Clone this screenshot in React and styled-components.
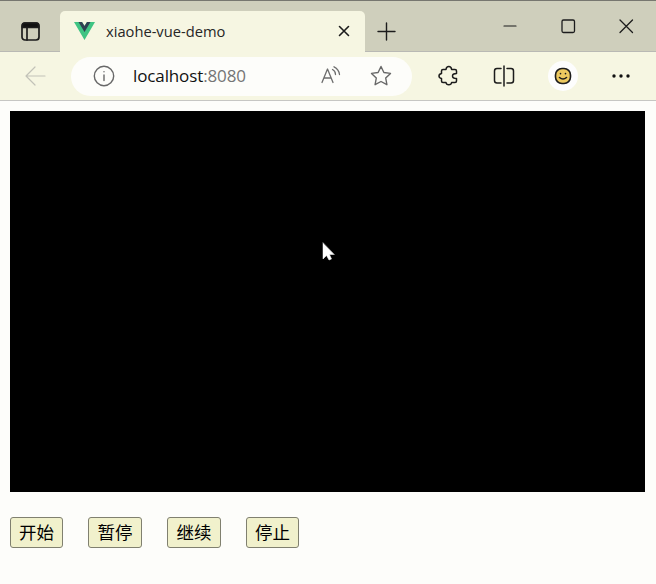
import React from "react";
import styled, { createGlobalStyle } from "styled-components";

const Global = createGlobalStyle`
  * { box-sizing: border-box; }
  body { margin: 0; background: #fdfdfa; overflow: hidden; font-family: "Open Sans", "Noto Sans CJK SC", sans-serif; }
`;
const Window = styled.div`
  position: relative; width: 656px; height: 584px; background: #fdfdfa; overflow: hidden;
`;
const TitleBar = styled.header`
  display: flex; height: 52px; padding-top: 12px; background: #cfcfbc;
  border-top: 1px solid #777770; border-bottom: 1px solid #b9b9b4;
`;
const Side = styled.div`
  width: 60px; padding: 9px 0 0 21px;
`;
const Tab = styled.div`
  display: flex; align-items: center; width: 305px; height: 42px; margin-top: -2px;
  padding: 0 15px 2px 14px; background: #f6f6e2; border-radius: 5px 5px 0 0;
`;
const TabTitle = styled.span`
  flex: 1; margin-left: 11px; font-size: 14.7px; line-height: 20px; color: #262626;
  white-space: nowrap;
`;
const Plus = styled.div`
  flex: 1; padding: 9px 0 0 12px;
`;
const Controls = styled.div`
  display: flex; gap: 42px; padding: 5px 22px 0 0;
`;
const Toolbar = styled.div`
  display: flex; align-items: center; height: 49px; background: #f6f6e2;
  border-bottom: 1px solid #c6c6c3;
`;
const Back = styled.div`
  width: 71px; padding-left: 24px; height: 22px;
`;
const Address = styled.div`
  display: flex; align-items: center; width: 341px; height: 39px; padding: 0 20px 0 22px;
  border-radius: 20px; background: #fdfdfa;
`;
const Url = styled.span`
  flex: 1; margin-left: 18px; color: #111; font-size: 17px; line-height: 24px;
  letter-spacing: -0.12px; white-space: nowrap;
`;
const Port = styled.span`
  color: #757575;
`;
const AddressActions = styled.div`
  display: flex; align-items: center; gap: 29px;
`;
const Tools = styled.div`
  flex: 1; display: flex; align-items: center; justify-content: space-between; padding: 0 25px 0 26px;
`;
const Avatar = styled.div`
  display: flex; align-items: center; justify-content: center; width: 30px; height: 30px;
  border-radius: 50%; background: #fdfdfd;
`;
const Page = styled.main`
  padding: 10px 10px 0;
`;
const Video = styled.div`
  width: 635px; height: 381px; background: #000;
`;
const Actions = styled.div`
  display: flex; gap: 25px; margin-top: 25px;
`;
const Action = styled.button`
  width: ${(p) => p.$w}px; height: 31px; padding: 0; border: 1px solid #80806f; border-radius: 3px;
  background: #f1f1cc; color: #000; font: 17.5px/26px "Noto Sans CJK SC", sans-serif;
  padding-bottom: 2px;
`;
const Icon = styled.svg`
  display: block; flex: none; fill: none; stroke: ${(p) => p.$c || "#1c1c1c"};
  stroke-width: ${(p) => p.$s || 1.4}; stroke-linecap: round; stroke-linejoin: round;
`;
const Pointer = styled(Icon)`
  position: absolute; left: 322px; top: 242px;
`;

const buttons = [["开始", 53], ["暂停", 54], ["继续", 54], ["停止", 53]];

export default function App() {
  return (
    <Window>
      <Global />
      <TitleBar>
        <Side>
          <Icon width="20" height="20" $s="1.7">
            <rect x="1" y="1" width="17" height="17" rx="3" />
            <path d="M1.5 4V3q0-2 2-2h12q2 0 2 2v2.5h-16z" fill="#111" />
            <path d="M6 5v13" />
          </Icon>
        </Side>
        <Tab>
          <Icon width="21" height="19" $c="none">
            <path d="M0 0h8l2.500 4L13 0h8L10.500 18z" fill="#3fc483" />
            <path d="M4.500 0H8l2.500 4L13 0h3.500l-6 10z" fill="#2f4052" />
          </Icon>
          <TabTitle>xiaohe-vue-demo</TabTitle>
          <Icon width="12" height="12" $s="1.6"><path d="M1.500 1.500l9 9m0-9l-9 9" /></Icon>
        </Tab>
        <Plus><Icon width="19" height="19" $s="1.4"><path d="M9.500 1v17M1 9.500h17" /></Icon></Plus>
        <Controls>
          <Icon width="16" height="16" $s="1.2"><path d="M2 8h12" /></Icon>
          <Icon width="16" height="16" $s="1.3"><rect x="2" y="2" width="12.500" height="12.500" rx="1.500" /></Icon>
          <Icon width="16" height="16" $s="1.3"><path d="M2 2l12.500 12.500m0-12.500L2 14.500" /></Icon>
        </Controls>
      </TitleBar>
      <Toolbar>
        <Back><Icon width="22" height="22" $c="#c2c2b8" $s="1.2"><path d="M21 11H2m9-9l-9 9 9 9" /></Icon></Back>
        <Address>
          <Icon width="22" height="22" $c="#686868">
            <circle cx="11" cy="11" r="9.700" /><path d="M11 10v5.500M11 6.600v.2" />
          </Icon>
          <Url>localhost<Port>:8080</Port></Url>
          <AddressActions>
            <Icon width="21" height="20" $c="#6d6d6d" $s="1.300">
              <path d="M2 16.500L7.500 3l5.500 13.500M4 12h7M12.500 3.500q3 1.500 3 5M14 .8q5 2.500 5.500 7.700" />
            </Icon>
            <Icon width="22" height="22" $c="#686868">
              <path d="M11 1.500l2.900 6 6.600.9-4.800 4.600 1.200 6.700-5.900-3.200-5.900 3.200 1.200-6.700-4.800-4.600 6.600-.9z" />
            </Icon>
          </AddressActions>
        </Address>
        <Tools>
          <Icon width="22" height="22" $s="1.500">
            <path d="M5 4.500h3q.3-3 2.800-3t2.800 3H17q1.500 0 1.500 1.500v2.500q-4 0-4 2.500t4 2.500V16q0 1.500-1.500 1.500h-3.400q-.3 2.300-2.800 2.300T8 17.500H5Q3.500 17.500 3.500 16v-2.500Q1 13 1 11t2.500-2.500V6Q3.500 4.500 5 4.500z" />
          </Icon>
          <Icon width="22" height="22" $s="1.500">
            <path d="M8 3.500H4q-2.500 0-2.500 2.500v9.500q0 2.500 2.500 2.500h4M14 3.500h4q2.500 0 2.500 2.500v9.500q0 2.500-2.500 2.500h-4M11 1v20" />
          </Icon>
          <Avatar>
            <Icon width="18" height="18" $s="1.600">
              <rect x="1.500" y="1.500" width="15" height="15" rx="6.500" fill="#edc95f" />
              <path d="M6.500 6.500v.3m5-.3v.3M5.500 10.500q3.500 3 7 0" />
            </Icon>
          </Avatar>
          <Icon width="20" height="20" $c="none">
            <g fill="#111"><circle cx="3" cy="10" r="1.700" /><circle cx="10" cy="10" r="1.700" /><circle cx="17" cy="10" r="1.700" /></g>
          </Icon>
        </Tools>
      </Toolbar>
      <Page>
        <Video />
        <Actions>{buttons.map(([label, w]) => <Action key={label} $w={w}>{label}</Action>)}</Actions>
      </Page>
      <Pointer width="14" height="20" $c="#fff" $s=".5"><path d="M1 1v16l3.500-3.500L7 18l2.500-1-2-4.500H12z" fill="#fff" /></Pointer>
    </Window>
  );
}
